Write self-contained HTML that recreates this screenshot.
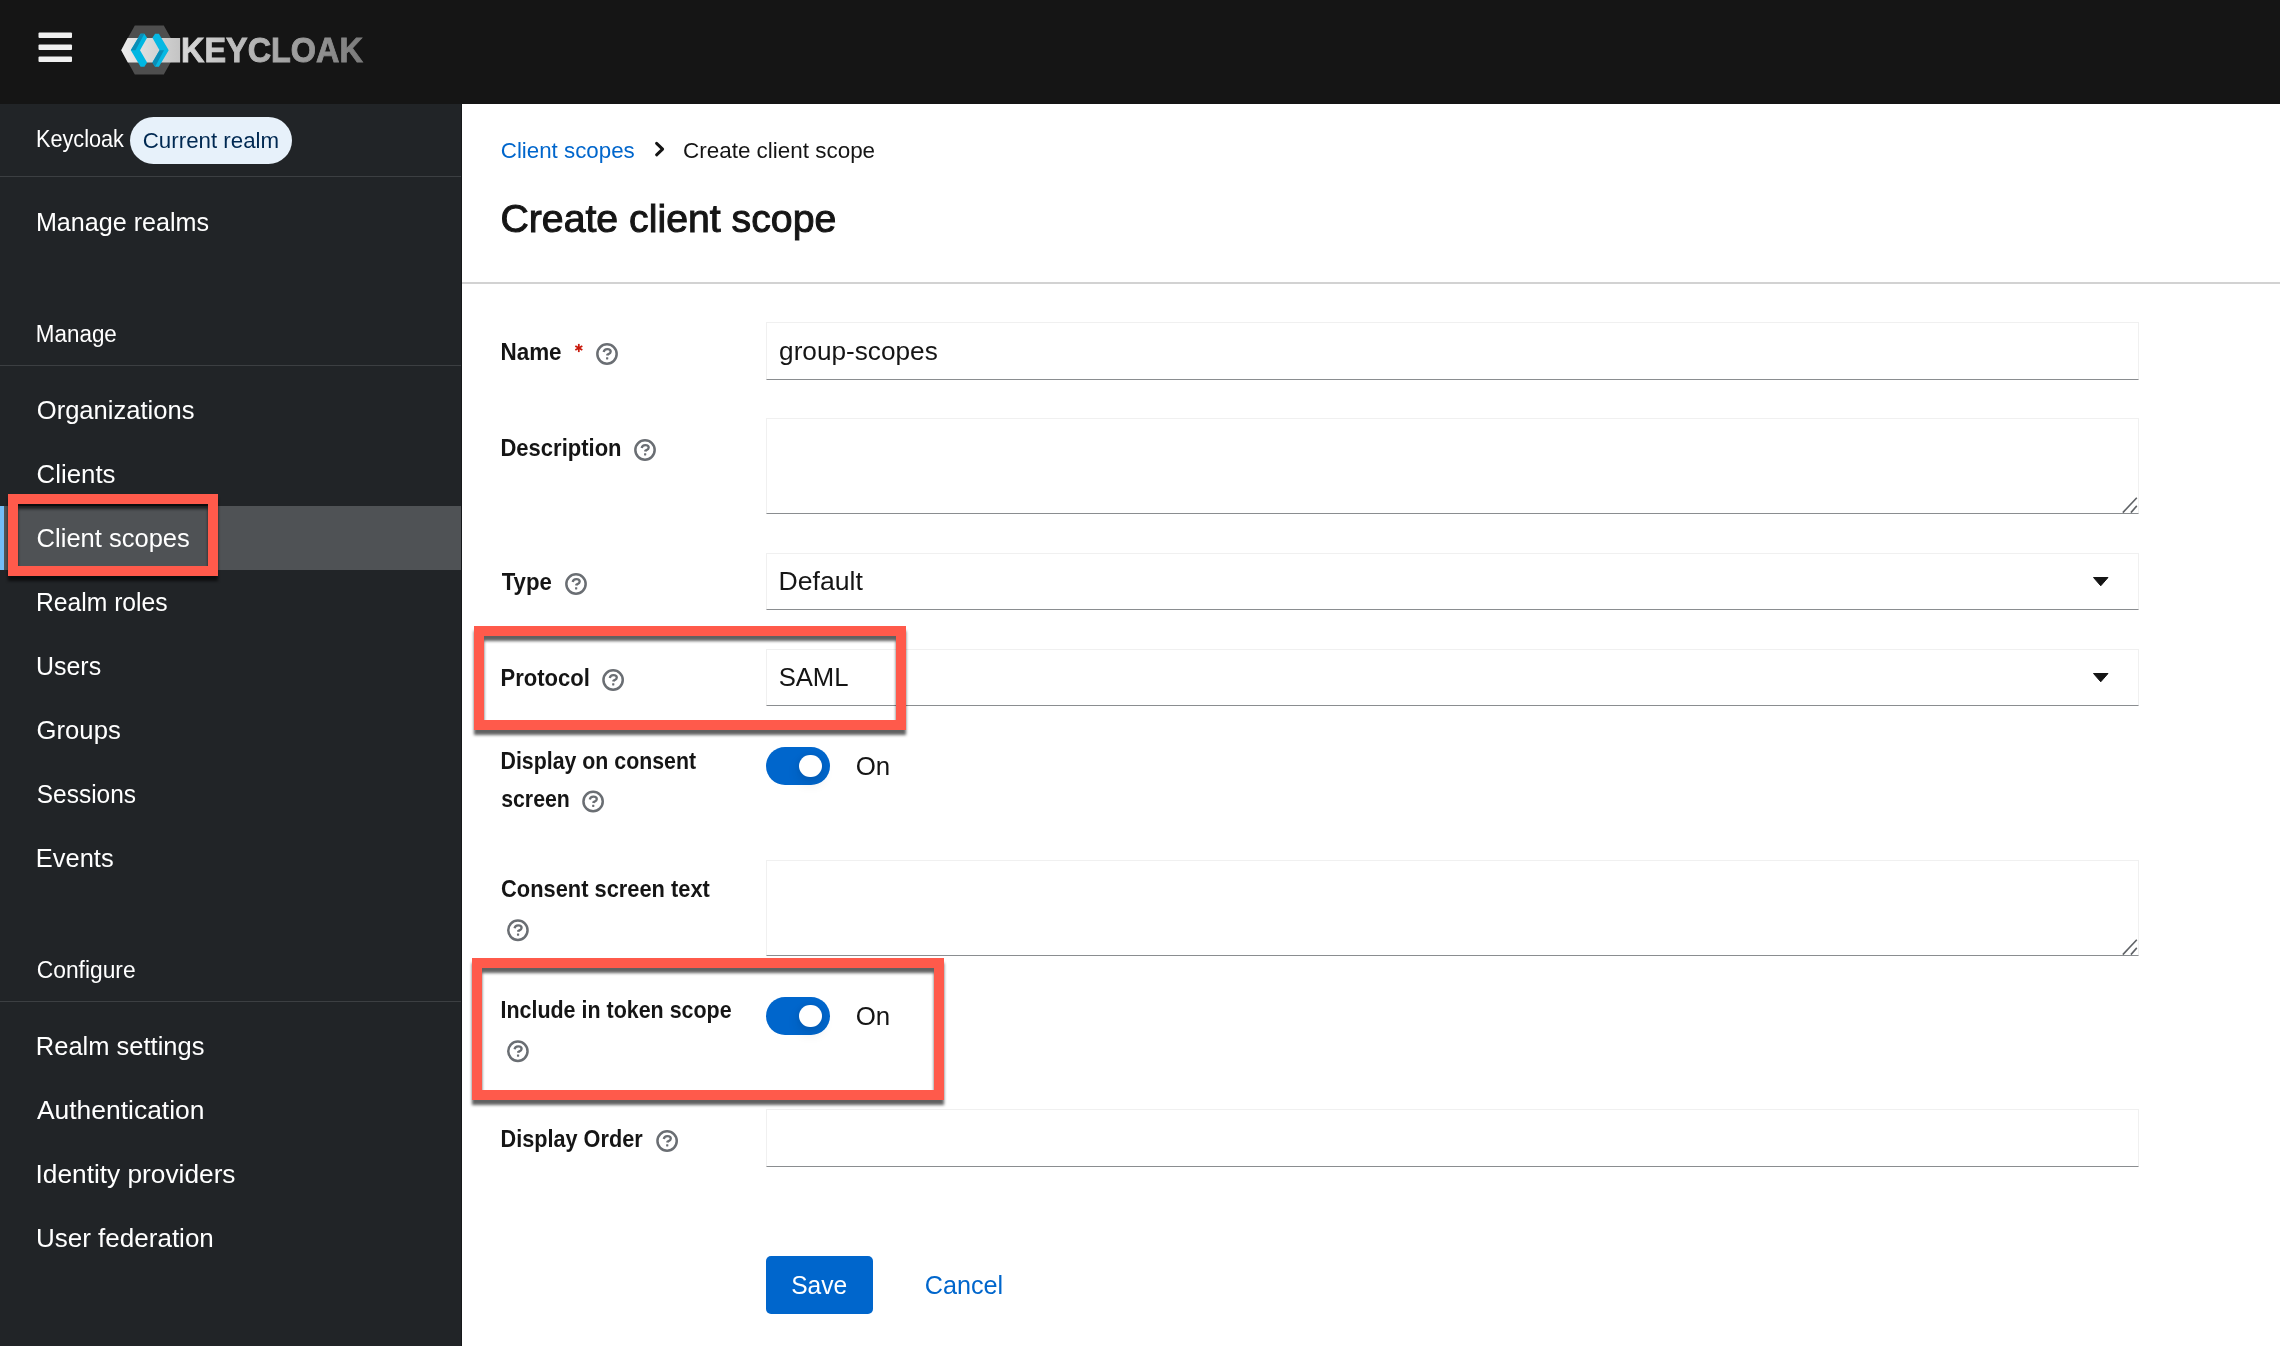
<!DOCTYPE html>
<html><head><meta charset="utf-8"><style>
html,body{margin:0;padding:0;}
body{width:2280px;height:1346px;overflow:hidden;position:relative;background:#fff;font-family:"Liberation Sans",sans-serif;}
.abs{position:absolute;}
.fld{position:absolute;left:766px;width:1373px;box-sizing:border-box;background:#fff;border:1px solid #f0f0f0;border-bottom:1px solid #8a8d90;}
.rbox{position:absolute;box-sizing:border-box;border:10px solid #ff5a4b;filter:drop-shadow(0 5px 1.8px rgba(0,0,0,0.62));}
svg{position:absolute;left:0;top:0;will-change:transform;}
</style></head><body>
<div class="abs" style="left:0;top:0;width:2280px;height:104px;background:#151515"></div>
<div class="abs" style="left:0;top:104px;width:462px;height:1242px;background:#212427"></div>
<div class="abs" style="left:461px;top:104px;width:1px;height:1242px;background:#16181a"></div>
<div class="abs" style="left:0;top:176px;width:461px;height:1px;background:#3c3f42"></div>
<div class="abs" style="left:0;top:365px;width:461px;height:1px;background:#3c3f42"></div>
<div class="abs" style="left:0;top:1001px;width:461px;height:1px;background:#3c3f42"></div>
<div class="abs" style="left:0;top:506px;width:461px;height:64px;background:#4f5255"></div>
<div class="abs" style="left:0;top:506px;width:4px;height:64px;background:#73bcf7"></div>
<div class="abs" style="left:130px;top:117px;width:162px;height:47px;border-radius:24px;background:#e7f1fa"></div>
<div class="abs" style="left:462px;top:282px;width:1818px;height:2px;background:#d2d2d2"></div>
<div class="fld" style="top:322px;height:58px"></div>
<div class="fld" style="top:418px;height:96px"></div>
<div class="fld" style="top:553px;height:57px"></div>
<div class="fld" style="top:649px;height:57px"></div>
<div class="fld" style="top:860px;height:96px"></div>
<div class="fld" style="top:1109px;height:58px"></div>
<div class="abs" style="left:766px;top:747px;width:64px;height:38px;border-radius:19px;background:#0066cc"></div>
<div class="abs" style="left:799.3px;top:754.7px;width:22.6px;height:22.6px;border-radius:50%;background:#fff;box-shadow:0 6px 13px rgba(3,3,3,0.12),0 0 6px rgba(3,3,3,0.06)"></div>
<div class="abs" style="left:766px;top:997px;width:64px;height:38px;border-radius:19px;background:#0066cc"></div>
<div class="abs" style="left:799.3px;top:1004.7px;width:22.6px;height:22.6px;border-radius:50%;background:#fff;box-shadow:0 6px 13px rgba(3,3,3,0.12),0 0 6px rgba(3,3,3,0.06)"></div>
<div class="abs" style="left:766px;top:1256px;width:107px;height:58px;border-radius:5px;background:#0066cc"></div>
<svg width="2280" height="1346" viewBox="0 0 2280 1346" style="font-family:'Liberation Sans',sans-serif">
<defs>
<linearGradient id="band" x1="0" x2="1" y1="0" y2="0"><stop offset="0" stop-color="#ececec"/><stop offset="1" stop-color="#c4c4c4"/></linearGradient>
<linearGradient id="kc" x1="0" x2="1" y1="0" y2="0"><stop offset="0" stop-color="#d9d9d9"/><stop offset="1" stop-color="#7a7a7a"/></linearGradient>
</defs>
<g fill="#f0f0f0">
<rect x="38.5" y="32.4" width="33.5" height="5.5" rx="1"/>
<rect x="38.5" y="44.4" width="33.5" height="5.5" rx="1"/>
<rect x="38.5" y="56.4" width="33.5" height="5.5" rx="1"/>
</g>
<polygon points="134.8,25.4 163.8,25.4 177.6,50 163.8,74.6 134.8,74.6 121.2,50" fill="#4e4e4e"/>
<polygon points="127.6,38.1 171.5,38.1 180.1,38.1 180.1,62.6 171.5,62.6 127.8,62.6 121.2,50.3" fill="url(#band)"/>
<polygon points="140.6,33.8 144.4,33.8 147.1,37.8 140.0,50.3 147.1,62.6 144.4,66.8 140.6,66.8 130.8,50.3" fill="#00b7e2"/>
<polygon points="140.6,33.8 144.4,33.8 135.5,50.3 130.8,50.3" fill="#0b8db6"/>
<polygon points="158.9,33.8 155.1,33.8 152.4,37.8 159.5,50.3 152.4,62.6 155.1,66.8 158.9,66.8 168.7,50.3" fill="#06b8e3"/>
<polygon points="159.5,50.3 164.0,50.3 155.1,66.8 152.4,62.6" fill="#0b8db6"/>
<text x="180.99" y="62.15" font-size="35.2" font-weight="bold" fill="url(#kc)" textLength="181.88" lengthAdjust="spacingAndGlyphs" stroke="url(#kc)" stroke-width="0.9">KEYCLOAK</text>
<text x="35.89" y="231.00" font-size="26.5" font-weight="normal" fill="#ffffff" textLength="173.15" lengthAdjust="spacingAndGlyphs">Manage realms</text><text x="36.75" y="419.40" font-size="26.5" font-weight="normal" fill="#ffffff" textLength="157.75" lengthAdjust="spacingAndGlyphs">Organizations</text><text x="36.61" y="483.10" font-size="26.5" font-weight="normal" fill="#ffffff" textLength="78.94" lengthAdjust="spacingAndGlyphs">Clients</text><text x="36.62" y="546.90" font-size="26.5" font-weight="normal" fill="#ffffff" textLength="153.22" lengthAdjust="spacingAndGlyphs">Client scopes</text><text x="35.92" y="611.25" font-size="26.5" font-weight="normal" fill="#ffffff" textLength="131.79" lengthAdjust="spacingAndGlyphs">Realm roles</text><text x="36.03" y="675.00" font-size="26.5" font-weight="normal" fill="#ffffff" textLength="65.08" lengthAdjust="spacingAndGlyphs">Users</text><text x="36.62" y="739.40" font-size="26.5" font-weight="normal" fill="#ffffff" textLength="84.11" lengthAdjust="spacingAndGlyphs">Groups</text><text x="36.80" y="803.10" font-size="26.5" font-weight="normal" fill="#ffffff" textLength="99.20" lengthAdjust="spacingAndGlyphs">Sessions</text><text x="35.86" y="866.90" font-size="26.5" font-weight="normal" fill="#ffffff" textLength="77.78" lengthAdjust="spacingAndGlyphs">Events</text><text x="35.86" y="1055.00" font-size="26.5" font-weight="normal" fill="#ffffff" textLength="168.60" lengthAdjust="spacingAndGlyphs">Realm settings</text><text x="36.90" y="1119.00" font-size="26.5" font-weight="normal" fill="#ffffff" textLength="167.60" lengthAdjust="spacingAndGlyphs">Authentication</text><text x="35.54" y="1182.75" font-size="26.5" font-weight="normal" fill="#ffffff" textLength="199.98" lengthAdjust="spacingAndGlyphs">Identity providers</text><text x="35.95" y="1246.90" font-size="26.5" font-weight="normal" fill="#ffffff" textLength="177.90" lengthAdjust="spacingAndGlyphs">User federation</text><text x="35.86" y="342.25" font-size="23" font-weight="normal" fill="#ffffff" textLength="80.98" lengthAdjust="spacingAndGlyphs">Manage</text><text x="36.76" y="978.10" font-size="23" font-weight="normal" fill="#ffffff" textLength="98.89" lengthAdjust="spacingAndGlyphs">Configure</text><text x="35.91" y="147.25" font-size="24.2" font-weight="normal" fill="#ffffff" textLength="88.04" lengthAdjust="spacingAndGlyphs">Keycloak</text><text x="142.78" y="147.90" font-size="22.3" font-weight="normal" fill="#002952" textLength="136.32" lengthAdjust="spacingAndGlyphs">Current realm</text><text x="500.78" y="157.75" font-size="22.3" font-weight="normal" fill="#0066cc" textLength="133.95" lengthAdjust="spacingAndGlyphs">Client scopes</text><text x="683.03" y="157.75" font-size="22.3" font-weight="normal" fill="#151515" textLength="192.09" lengthAdjust="spacingAndGlyphs">Create client scope</text><text x="500.44" y="231.75" font-size="39.5" font-weight="normal" fill="#151515" textLength="335.84" lengthAdjust="spacingAndGlyphs" stroke="#151515" stroke-width="1">Create client scope</text><text x="500.44" y="360.00" font-size="23.2" font-weight="bold" fill="#151515" textLength="61.17" lengthAdjust="spacingAndGlyphs">Name</text><text x="500.47" y="456.00" font-size="23.2" font-weight="bold" fill="#151515" textLength="121.08" lengthAdjust="spacingAndGlyphs">Description</text><text x="501.68" y="590.00" font-size="23.2" font-weight="bold" fill="#151515" textLength="50.20" lengthAdjust="spacingAndGlyphs">Type</text><text x="500.47" y="686.00" font-size="23.2" font-weight="bold" fill="#151515" textLength="89.33" lengthAdjust="spacingAndGlyphs">Protocol</text><text x="500.51" y="769.00" font-size="23.2" font-weight="bold" fill="#151515" textLength="195.63" lengthAdjust="spacingAndGlyphs">Display on consent</text><text x="501.15" y="806.50" font-size="23.2" font-weight="bold" fill="#151515" textLength="68.72" lengthAdjust="spacingAndGlyphs">screen</text><text x="501.03" y="896.90" font-size="23.2" font-weight="bold" fill="#151515" textLength="208.88" lengthAdjust="spacingAndGlyphs">Consent screen text</text><text x="500.51" y="1018.10" font-size="23.2" font-weight="bold" fill="#151515" textLength="231.09" lengthAdjust="spacingAndGlyphs">Include in token scope</text><text x="500.49" y="1147.25" font-size="23.2" font-weight="bold" fill="#151515" textLength="142.14" lengthAdjust="spacingAndGlyphs">Display Order</text><text x="779.10" y="360.00" font-size="26.5" font-weight="normal" fill="#151515" textLength="158.65" lengthAdjust="spacingAndGlyphs">group-scopes</text><text x="778.52" y="590.00" font-size="26.5" font-weight="normal" fill="#151515" textLength="84.41" lengthAdjust="spacingAndGlyphs">Default</text><text x="778.64" y="686.00" font-size="26.5" font-weight="normal" fill="#151515" textLength="69.91" lengthAdjust="spacingAndGlyphs">SAML</text><text x="855.74" y="774.75" font-size="26" font-weight="normal" fill="#151515" textLength="34.52" lengthAdjust="spacingAndGlyphs">On</text><text x="855.74" y="1024.75" font-size="26" font-weight="normal" fill="#151515" textLength="34.52" lengthAdjust="spacingAndGlyphs">On</text><text x="791.19" y="1294.00" font-size="26" font-weight="normal" fill="#ffffff" textLength="56.00" lengthAdjust="spacingAndGlyphs">Save</text><text x="924.74" y="1294.00" font-size="26" font-weight="normal" fill="#0066cc" textLength="78.47" lengthAdjust="spacingAndGlyphs">Cancel</text>
<g transform="translate(578.8,348)" stroke="#c9190b" stroke-width="1.75"><line x1="0" y1="-4.1" x2="0" y2="4.1"/><line x1="3.5" y1="-2.05" x2="-3.5" y2="2.05"/><line x1="-3.5" y1="-2.05" x2="3.5" y2="2.05"/></g>
<g transform="translate(607,354)"><circle r="9.65" fill="none" stroke="#6a6e73" stroke-width="2.5"/><path d="M-3.3,-2.0 C-3.0,-4.0 -1.6,-4.9 0.3,-4.9 C2.3,-4.9 3.7,-3.8 3.7,-2.3 C3.7,-0.7 2.2,-0.2 0.4,0.7 L0.4,1.6" fill="none" stroke="#6a6e73" stroke-width="2.3"/><rect x="-0.95" y="3.2" width="2.2" height="2.2" rx="0.4" fill="#6a6e73"/></g><g transform="translate(645,450)"><circle r="9.65" fill="none" stroke="#6a6e73" stroke-width="2.5"/><path d="M-3.3,-2.0 C-3.0,-4.0 -1.6,-4.9 0.3,-4.9 C2.3,-4.9 3.7,-3.8 3.7,-2.3 C3.7,-0.7 2.2,-0.2 0.4,0.7 L0.4,1.6" fill="none" stroke="#6a6e73" stroke-width="2.3"/><rect x="-0.95" y="3.2" width="2.2" height="2.2" rx="0.4" fill="#6a6e73"/></g><g transform="translate(576,584)"><circle r="9.65" fill="none" stroke="#6a6e73" stroke-width="2.5"/><path d="M-3.3,-2.0 C-3.0,-4.0 -1.6,-4.9 0.3,-4.9 C2.3,-4.9 3.7,-3.8 3.7,-2.3 C3.7,-0.7 2.2,-0.2 0.4,0.7 L0.4,1.6" fill="none" stroke="#6a6e73" stroke-width="2.3"/><rect x="-0.95" y="3.2" width="2.2" height="2.2" rx="0.4" fill="#6a6e73"/></g><g transform="translate(613.1,680)"><circle r="9.65" fill="none" stroke="#6a6e73" stroke-width="2.5"/><path d="M-3.3,-2.0 C-3.0,-4.0 -1.6,-4.9 0.3,-4.9 C2.3,-4.9 3.7,-3.8 3.7,-2.3 C3.7,-0.7 2.2,-0.2 0.4,0.7 L0.4,1.6" fill="none" stroke="#6a6e73" stroke-width="2.3"/><rect x="-0.95" y="3.2" width="2.2" height="2.2" rx="0.4" fill="#6a6e73"/></g><g transform="translate(593.1,801.5)"><circle r="9.65" fill="none" stroke="#6a6e73" stroke-width="2.5"/><path d="M-3.3,-2.0 C-3.0,-4.0 -1.6,-4.9 0.3,-4.9 C2.3,-4.9 3.7,-3.8 3.7,-2.3 C3.7,-0.7 2.2,-0.2 0.4,0.7 L0.4,1.6" fill="none" stroke="#6a6e73" stroke-width="2.3"/><rect x="-0.95" y="3.2" width="2.2" height="2.2" rx="0.4" fill="#6a6e73"/></g><g transform="translate(517.9,930.25)"><circle r="9.65" fill="none" stroke="#6a6e73" stroke-width="2.5"/><path d="M-3.3,-2.0 C-3.0,-4.0 -1.6,-4.9 0.3,-4.9 C2.3,-4.9 3.7,-3.8 3.7,-2.3 C3.7,-0.7 2.2,-0.2 0.4,0.7 L0.4,1.6" fill="none" stroke="#6a6e73" stroke-width="2.3"/><rect x="-0.95" y="3.2" width="2.2" height="2.2" rx="0.4" fill="#6a6e73"/></g><g transform="translate(517.9,1051.25)"><circle r="9.65" fill="none" stroke="#6a6e73" stroke-width="2.5"/><path d="M-3.3,-2.0 C-3.0,-4.0 -1.6,-4.9 0.3,-4.9 C2.3,-4.9 3.7,-3.8 3.7,-2.3 C3.7,-0.7 2.2,-0.2 0.4,0.7 L0.4,1.6" fill="none" stroke="#6a6e73" stroke-width="2.3"/><rect x="-0.95" y="3.2" width="2.2" height="2.2" rx="0.4" fill="#6a6e73"/></g><g transform="translate(667.1,1141)"><circle r="9.65" fill="none" stroke="#6a6e73" stroke-width="2.5"/><path d="M-3.3,-2.0 C-3.0,-4.0 -1.6,-4.9 0.3,-4.9 C2.3,-4.9 3.7,-3.8 3.7,-2.3 C3.7,-0.7 2.2,-0.2 0.4,0.7 L0.4,1.6" fill="none" stroke="#6a6e73" stroke-width="2.3"/><rect x="-0.95" y="3.2" width="2.2" height="2.2" rx="0.4" fill="#6a6e73"/></g>
<path d="M656.6,143.4 L662.6,149.1 L656.6,154.8" fill="none" stroke="#151515" stroke-width="3.0" stroke-linecap="round" stroke-linejoin="round"/>
<path d="M2093.5,577.5 L2108,577.5 L2100.75,585.8 Z" fill="#151515" stroke="#151515" stroke-width="1" stroke-linejoin="round"/>
<path d="M2093.5,673.5 L2108,673.5 L2100.75,681.8 Z" fill="#151515" stroke="#151515" stroke-width="1" stroke-linejoin="round"/>
<g stroke="#5f6266" stroke-width="1.6">
<line x1="2122.8" y1="512.6" x2="2136.8" y2="497.8"/><line x1="2130.9" y1="512.6" x2="2136.8" y2="505.9"/>
<line x1="2122.8" y1="954.6" x2="2136.8" y2="939.8"/><line x1="2130.9" y1="954.6" x2="2136.8" y2="947.9"/>
</g>
</svg>
<div class="rbox" style="left:8px;top:494px;width:210px;height:82px"></div>
<div class="rbox" style="left:474px;top:626px;width:432px;height:104px"></div>
<div class="rbox" style="left:472px;top:958px;width:472px;height:142px"></div>
</body></html>
